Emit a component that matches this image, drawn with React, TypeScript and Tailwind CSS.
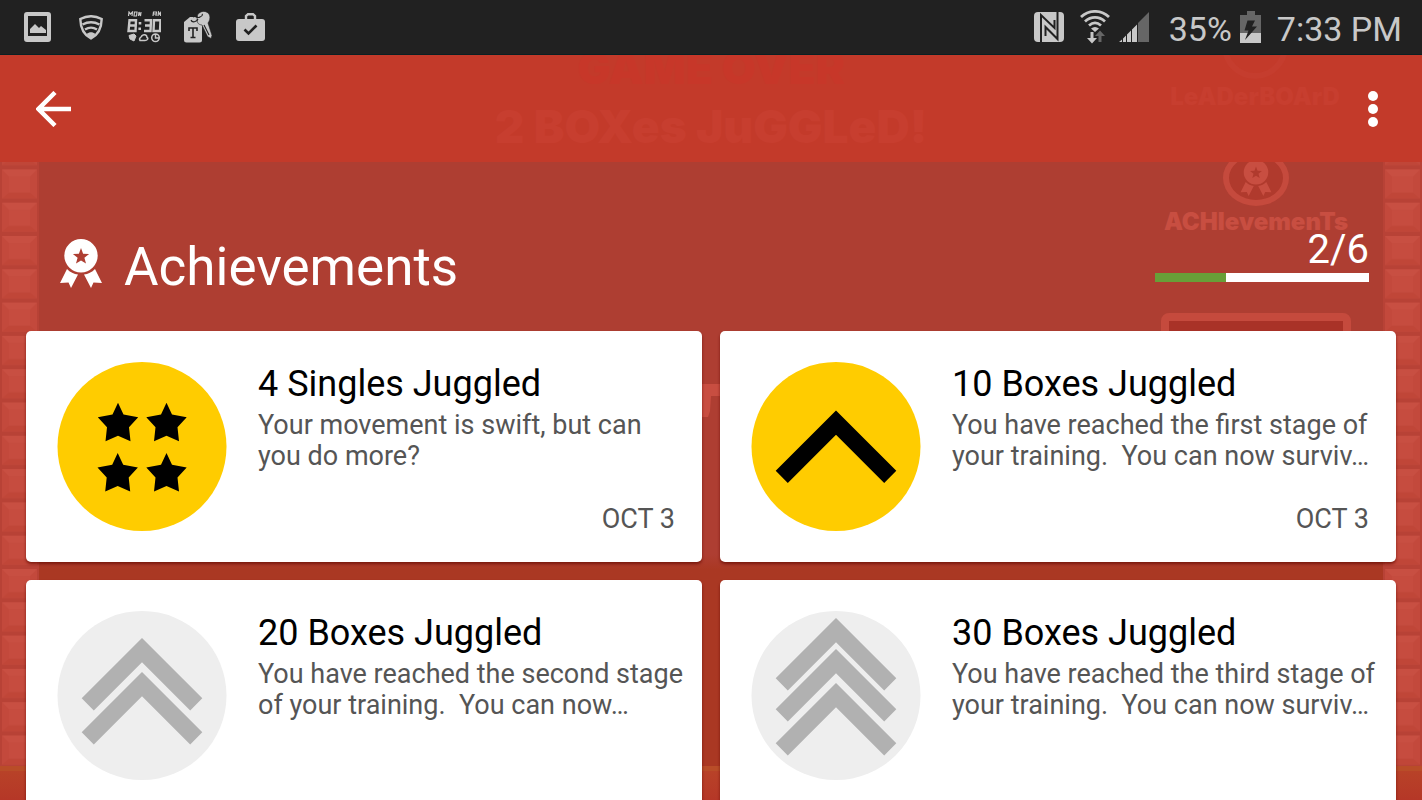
import React from "react";

type Badge = "stars" | 1 | 2 | 3;

interface Achievement {
  title: string;
  text: string;
  date?: string;
  badge: Badge;
}

const achievements: Achievement[] = [
  { title: "4 Singles Juggled", text: "Your movement is swift, but can you do more?", date: "OCT 3", badge: "stars" },
  { title: "10 Boxes Juggled", text: "You have reached the first stage of your training.\u00a0 You can now surviv…", date: "OCT 3", badge: 1 },
  { title: "20 Boxes Juggled", text: "You have reached the second stage of your training.\u00a0 You can now…", badge: 2 },
  { title: "30 Boxes Juggled", text: "You have reached the third stage of your training.\u00a0 You can now surviv…", badge: 3 },
];

const STAR = "M0-20.500 5.500-8.800 20.200-6 11 4 12.500 18 0 12.500-12.500 18-11 4-20.200-6-5.500-8.800Z";
const CHEVRON = "M85 0 145.300 60.300 133.200 72.400 85 24.200 36.800 72.400 24.700 60.300Z";
const chevronTops: Record<1 | 2 | 3, number[]> = { 1: [48.5], 2: [27, 61], 3: [7, 38, 72] };

function BadgeIcon({ badge, unlocked }: { badge: Badge; unlocked: boolean }) {
  return (
    <svg viewBox="0 0 170 170" className="size-[170px] shrink-0" aria-hidden="true">
      <circle cx="85" cy="84.500" r="84.500" fill={unlocked ? "#ffcc00" : "#eeeeee"} />
      <g fill={unlocked ? "#000" : "#b1b1b1"}>
        {badge === "stars"
          ? [[61, 61.300], [109.500, 61.300], [60.700, 111.500], [109.500, 111.500]].map(([x, y]) => (
              <path key={`${x}-${y}`} d={STAR} transform={`translate(${x} ${y})`} />
            ))
          : chevronTops[badge].map((y) => <path key={y} d={CHEVRON} transform={`translate(0 ${y})`} />)}
      </g>
    </svg>
  );
}

function Ribbon({ className }: { className: string }) {
  return (
    <svg viewBox="0 0 42 49" className={className} fill="currentColor" aria-hidden="true">
      <path
        fillRule="evenodd"
        d="M21 0a16.700 16.700 0 1 1 0 33.400 16.700 16.700 0 0 1 0-33.400Zm0 9-2.100 5.700-6 .4 4.700 3.700-1.600 5.800 5-3.200 5 3.200-1.600-5.800 4.700-3.700-6-.4Z"
      />
      <path d="M7 30c3 3.200 7 5 11 5.500L11 49 8.500 43.500 0 44ZM35 30c-3 3.200-7 5-11 5.500L31 49l2.500-5.500 8.500.5Z" />
    </svg>
  );
}

function StatusBar() {
  return (
    <div className="flex h-[55px] shrink-0 items-center justify-between border-b border-[#0b2023] bg-[#212121] pr-5 pl-6 text-[#c8c8c8]">
      <div className="flex items-center">
        <svg viewBox="0 0 27 30" className="h-[30px] w-[27px]" aria-hidden="true">
          <path fill="currentColor" fillRule="evenodd" d="M3 0h21a3 3 0 0 1 3 3v24a3 3 0 0 1-3 3H3a3 3 0 0 1-3-3V3a3 3 0 0 1 3-3Zm1 4v20h19V4Z" />
          <path fill="currentColor" d="M6 21v-4l5-5 4 4 2-2 5 4v3Z" />
        </svg>
        <svg viewBox="0 0 24 25" className="ml-7 h-[25px] w-6" fill="none" stroke="currentColor" strokeWidth="2.400" aria-hidden="true">
          <path d="M1.300 4C8 .5 16 .5 22.700 4 22.500 13 19 20 12 23.500 5 20 1.500 13 1.300 4Z" />
          <path d="M3.500 9.500c5.500-3 11.500-3 17 0M6 14.500c4-2.500 8-2.500 12 0" />
          <path fill="currentColor" stroke="none" d="M7.500 19c3-2.500 6-2.500 9 0L12 23.500Z" />
        </svg>
        <svg viewBox="0 0 34 32" className="ml-6 h-8 w-[34px]" fill="none" stroke="currentColor" aria-hidden="true">
          <path strokeWidth="1.200" d="M1.500 5 2 1l1.500 2L5.500 1 5 5M7 5l.5-4h2.500L9.500 5ZM11.500 5l.5-4 1.500 4 .5-4M26 5l.5-4h3L29 5M26 3h3M31 5l.5-4 1 2 1.500-2-.5 4" />
          <path strokeWidth="2.400" d="M2.500 9.200H9L8.500 20h-7ZM2 14.500h6.500M17.500 9.200H24L23.500 20h-6.500M18 14.500h5.500M27 9.200h6.500L33 20h-6.500Z" />
          <path strokeWidth="2.600" d="M13 11v2.500M12.700 16.500V19" />
          <path fill="currentColor" strokeWidth="1" d="M2 24.500 7 23l2 2-2 5-4-2Z" />
          <path strokeWidth="1.500" d="M13 29.500c-2-3 2-3 2-5 3-2 5 0 5 2 2 1 0 3-2 3ZM28.500 23a3.800 3.800 0 1 0 0 7.600 3.800 3.800 0 0 0 0-7.600Zm0 0v4h4" />
        </svg>
        <svg viewBox="0 0 28 32" className="ml-[23px] h-8 w-7" aria-hidden="true">
          <path fill="currentColor" d="m6 6 6 0 6 5v18q0 2.500-2.500 2.500H2.500Q0 31.500 0 29V11Z" />
          <path fill="currentColor" stroke="#212121" strokeWidth=".6" d="M13.500 4C16-.8 23.500-.8 25.500 4c1 3 0 6-1.500 8l4 12.500-1 3-3.500-2L18 14c-3 0-5-2-5-5Z" />
          <path fill="none" stroke="#212121" strokeWidth="1.100" d="M7 9c1 3 6 2 7-1M9 6c3-2 4 2 7 0 2-1 3-2 2-3M20 14l5 10" />
          <path fill="none" stroke="#212121" strokeWidth="1.600" d="M5 20v-3h8v3M9 17v10M6.500 26.500h5" />
        </svg>
        <svg viewBox="0 0 29 28" className="ml-6 h-7 w-[29px]" fill="none" aria-hidden="true">
          <rect y="6" width="29" height="22" rx="3" fill="currentColor" />
          <path stroke="currentColor" strokeWidth="2.400" d="M10 7V3l2-1.800h5L19 3v4" />
          <path stroke="#212121" strokeWidth="2.600" d="m8.500 16.500 4 4 8-8" />
        </svg>
      </div>
      <div className="flex items-center">
        <svg viewBox="0 0 30 30" className="h-[30px] w-[30px]" aria-hidden="true">
          <rect width="30" height="30" rx="4" fill="currentColor" />
          <path fill="none" stroke="#212121" strokeWidth="2" d="M7 30V3l13.500 13V8M23.500 0v27L11.500 15v9" />
        </svg>
        <svg viewBox="0 0 30 34" className="ml-4 h-[34px] w-[30px]" fill="none" stroke="currentColor" strokeWidth="2.800" aria-hidden="true">
          <path d="M1 7C9-.5 21-.5 29 7M5 11.500c6-5.500 14-5.500 20 0M9 15.500c4-3.500 8-3.500 12 0" />
          <path fill="currentColor" stroke="none" d="M11 18.500q4-3 8 0L15 22ZM10.500 22h3v6H17l-5 5.500L7 28h3.500Z" />
          <path fill="#666" stroke="none" d="M18.500 32v-6H15l5-5.500 5 5.500h-3.500v6Z" />
        </svg>
        <svg viewBox="0 0 30 30" className="ml-[9px] h-[30px] w-[30px]" aria-hidden="true">
          <path fill="#666" d="M19 11 30 0v30H19Z" />
          <path fill="currentColor" d="M18 12.500V30h-5V17.500ZM12 18.500V30H8v-7.500ZM7 23.500V30H4v-3.500ZM3 27.500V30H0Z" />
        </svg>
        <span className="ml-5 pt-1 text-[34px] leading-[42px]">35%</span>
        <svg viewBox="0 0 21 32" className="ml-2 h-8 w-[21px]" aria-hidden="true">
          <path fill="#666" d="M7 0h8v4h6v28H0V4h7Z" />
          <path fill="currentColor" d="M0 22h21v10H0Z" />
          <path fill="#212121" d="M7.500 9.500H15l-3 6h5L5 29l3.500-9.500H4.500Z" />
        </svg>
        <span className="ml-4 pt-1 text-[34px] leading-[42px]">7:33 PM</span>
      </div>
    </div>
  );
}

function BrickColumn({ className }: { className: string }) {
  return (
    <svg className={className} width="39" height="100%" aria-hidden="true">
      <defs>
        <pattern id="brick" width="39" height="33.300" y="13.500" patternUnits="userSpaceOnUse">
          <rect width="39" height="33.300" fill="#b84236" />
          <rect x="2" y="1" width="35" height="29" fill="#c3493c" />
          <path d="M2 1h35l-7 7H9Z" fill="#c84f42" />
          <path d="M2 30h35l-7-6H9Z" fill="#c04638" />
          <rect x="9" y="8" width="21" height="16" fill="#c64c3f" />
        </pattern>
      </defs>
      <rect width="39" height="100%" fill="url(#brick)" />
    </svg>
  );
}

/* The paused game, faintly visible behind the achievements list. */
function GameBackdrop() {
  return (
    <div className="absolute inset-0 overflow-hidden bg-linear-to-b from-[#ae3e32] from-67% to-[#aa3823] to-69%" aria-hidden="true">
      <BrickColumn className="absolute top-0 left-0" />
      <BrickColumn className="absolute top-0 right-0" />
      <div className="absolute inset-x-0 bottom-0 h-[34px] border-t-5 border-[#b94d28] bg-linear-to-b from-[#b84228] to-[#b53727]" />
      <svg viewBox="0 0 18 34" className="absolute top-[329px] left-1/2 -ml-[9px] h-[34px] w-[18px]">
        <path fill="#c84e41" d="M0 0h18v12H9L8 27 6 33H0Z" />
      </svg>
      <div className="absolute top-[95px] right-[71px] flex w-[190px] flex-col items-center text-[#c84e41]">
        <div className="flex h-14 w-[66px] items-center justify-center rounded-[50%] border-6 border-[#c54a3d] bg-[#b03a2d]">
          <Ribbon className="h-9 w-8" />
        </div>
        <span className="mt-1 font-[Inter] text-[24px] leading-[24px] font-black">ACHIevemenTs</span>
        <div className="mt-[79px] h-20 w-[190px] rounded-lg border-8 border-[#c54a3d] bg-[#a93227]" />
      </div>
    </div>
  );
}

function AppBar() {
  return (
    <header className="relative flex h-[107px] items-center justify-between overflow-hidden bg-[#c33a2a] px-9">
      <div className="absolute inset-0 flex flex-col items-center font-[Inter] font-black" aria-hidden="true">
        <span className="-mt-[12px] text-[44px] leading-[50px] text-[#c73729]">GAME OVER</span>
        <span className="mt-[6px] text-[46px] leading-[54px] text-[#c73e2f]">2 BOXes JuGGLeD!</span>
      </div>
      <div className="absolute -top-[42px] right-[82px] flex w-[170px] flex-col items-center text-[#c73e2f]" aria-hidden="true">
        <div className="size-[66px] rounded-full border-6 border-[#c53d2e]" />
        <span className="mt-1 font-[Inter] text-[24px] leading-7 font-black">LeADerBOArD</span>
      </div>
      <button type="button" aria-label="Back" className="relative text-white">
        <svg viewBox="0 0 35 36" className="h-9 w-[35px]" fill="none" stroke="currentColor" strokeWidth="4.500" aria-hidden="true">
          <path d="M35 18H3M19 1.500 2.500 18 19 34.500" />
        </svg>
      </button>
      <button type="button" aria-label="More options" className="relative flex w-[26px] flex-col items-center gap-[3px]">
        <span className="size-[10px] rounded-full bg-white" />
        <span className="size-[10px] rounded-full bg-white" />
        <span className="size-[10px] rounded-full bg-white" />
      </button>
    </header>
  );
}

function Card({ item }: { item: Achievement }) {
  return (
    <li className="flex h-[231px] gap-[31px] rounded-[5px] bg-white pt-[31px] pr-[18px] pl-[31px] shadow-[0_2px_3px_rgba(100,10,0,0.7)]">
      <BadgeIcon badge={item.badge} unlocked={item.date !== undefined} />
      <div className="flex min-w-0 flex-1 flex-col pt-px">
        <h2 className="text-[36px] leading-[42px] text-black">{item.title}</h2>
        <p className="mt-[5px] text-[27px] leading-[31px] text-[#555]">{item.text}</p>
        {item.date && <time className="mt-auto mr-[9px] mb-[27px] self-end text-[27px] leading-[31px] text-[#555]">{item.date}</time>}
      </div>
    </li>
  );
}

export default function App() {
  const done = 2;
  const total = 6;
  return (
    <div className="flex h-screen flex-col overflow-hidden bg-[#ae3e32] font-[Roboto,sans-serif]">
      <StatusBar />
      <div className="relative min-h-0 flex-1">
        <GameBackdrop />
        <div className="relative">
          <AppBar />
          <main>
            <div className="flex h-[169px] items-start justify-between pr-[53px] pl-[60px]">
              <div className="flex items-start gap-[22px] pt-[73px] text-white">
                <Ribbon className="mt-1 h-[49px] w-[42px]" />
                <h1 className="text-[53px] leading-[64px]">Achievements</h1>
              </div>
              <div className="flex w-[214px] flex-col items-end pt-[64px] text-white">
                <span className="text-[40px] leading-[47px]">{done}/{total}</span>
                <div className="h-[9px] w-full bg-white" role="progressbar" aria-label="Achievements unlocked" aria-valuenow={done} aria-valuemin={0} aria-valuemax={total}>
                  <div className="h-full bg-[#689f38]" style={{ width: `${(done / total) * 100}%` }} />
                </div>
              </div>
            </div>
            <ul className="grid grid-cols-2 gap-[18px] px-[26px]">
              {achievements.map((item) => (
                <Card key={item.title} item={item} />
              ))}
            </ul>
          </main>
        </div>
      </div>
    </div>
  );
}
